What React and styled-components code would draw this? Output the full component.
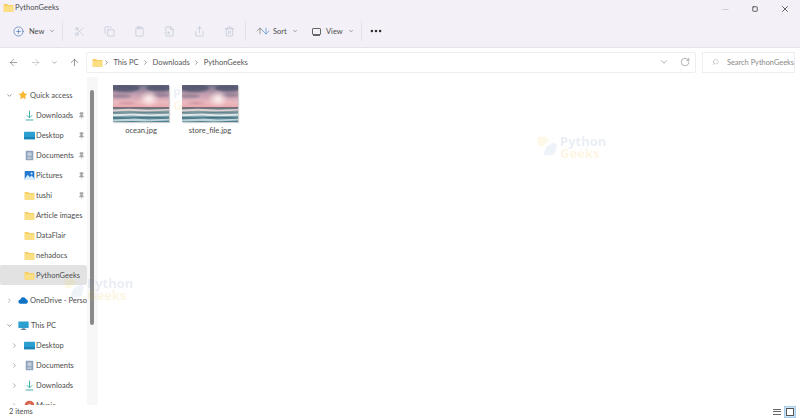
import styled, { createGlobalStyle } from "styled-components";
import {
  ArrowDown,
  ArrowLeft,
  ArrowRight,
  ArrowUp,
  ChevronDown,
  ChevronRight,
  Clipboard,
  Copy,
  MoreHorizontal,
  Pin,
  PlusCircle,
  RotateCw,
  Scissors,
  Search,
  Share,
  Trash2,
  X,
  Minus,
  Square,
  FileInput,
} from "lucide-react";

const GlobalStyle = createGlobalStyle`
  html, body { margin: 0; padding: 0; background: #fff; }
  body { font-family: Lato, "Open Sans", "Liberation Sans", sans-serif; color: #4d4d4d; overflow: hidden; }
`;

const Folder = ({ size = 11 }) => (
  <svg width={size} height={size} viewBox="0 0 16 16">
    <path d="M1 3h5l1.5 1.5H15v9.5H1z" fill="#f5cf63" />
    <path d="M1 6h14v8H1z" fill="#fbdf85" />
  </svg>
);

const DownloadIcon = () => (
  <svg width="11" height="11" viewBox="0 0 16 16" fill="none" stroke="#2fa8a0" strokeWidth="1.3">
    <path d="M8 1v10M4 7.5 8 11.5l4-4M2.5 14.5h11" />
  </svg>
);

const DesktopIcon = () => (
  <svg width="11" height="11" viewBox="0 0 16 16">
    <rect x="0" y="2.5" width="16" height="11" rx="1" fill="#2a9fd0" />
    <rect x="0" y="10" width="16" height="3.5" fill="#1b84b8" />
  </svg>
);

const DocumentsIcon = () => (
  <svg width="11" height="11" viewBox="0 0 16 16">
    <rect x="2.5" y="1" width="11" height="14" rx="1" fill="#8ea3bb" />
    <rect x="5" y="3.5" width="6" height="5" fill="#c4d0de" />
    <path d="M5 10.5h6M5 12.5h6" stroke="#d8e0e9" />
  </svg>
);

const PicturesIcon = () => (
  <svg width="11" height="11" viewBox="0 0 16 16">
    <rect x="1" y="1.5" width="14" height="13" rx="1" fill="#2378d0" />
    <path d="M1 13l4.5-6 3 3.5 2.5-2.5 4 4.5v2H1z" fill="#dbeeff" />
    <circle cx="11" cy="5" r="1.4" fill="#dbeeff" />
  </svg>
);

const StarIcon = () => (
  <svg width="10" height="10" viewBox="0 0 16 16">
    <path d="M8 .8l2.2 4.7 5 .6-3.7 3.5 1 5.1L8 12.2l-4.5 2.5 1-5.1L.8 6.1l5-.6z" fill="#f7b731" />
  </svg>
);

const CloudIcon = () => (
  <svg width="11" height="11" viewBox="0 0 16 16">
    <path d="M4 13a3.3 3.3 0 0 1-.4-6.6A4.6 4.6 0 0 1 12.4 6 3.6 3.6 0 0 1 12.5 13z" fill="#0f72c4" />
  </svg>
);

const PcIcon = () => (
  <svg width="11" height="11" viewBox="0 0 16 16">
    <rect x="0.5" y="2" width="15" height="9.5" rx="0.8" fill="#2a9fd0" />
    <rect x="6" y="11.5" width="4" height="2" fill="#7b93a8" />
    <rect x="4" y="13.3" width="8" height="1.2" fill="#5e7487" />
  </svg>
);

const MusicIcon = () => (
  <svg width="11" height="11" viewBox="0 0 16 16">
    <circle cx="8" cy="8" r="7" fill="#d9654f" />
    <circle cx="8" cy="8" r="2.5" fill="#f1d0c8" />
  </svg>
);

const waves = [
  { d: "M0 24.5l16-.8 20 1 20-.6v1.4l-22 .9-18-.7-16 .7z", fill: "#f0dcdc", o: 0.85 },
  { d: "M0 27l12 .8 22-1 22 .8v.9l-20-.5-20 .7-16-.5z", fill: "#4d6d7a", o: 0.55 },
  { d: "M0 29.3l20-.8 16 1 20-.8v1.8l-22 1-14-1-20 .8z", fill: "#e8f0f1", o: 0.9 },
  { d: "M0 32l14 .6 20-1 22 1v1.2l-18-.6-22 .8-16-.6z", fill: "#35687a", o: 0.75 },
  { d: "M0 34.6l22-1 14 1 20-.8v1.8l-24 1-12-.6-20 .6z", fill: "#cfe2e6", o: 0.85 },
];

const OceanThumb = () => (
  <Thumb viewBox="0 0 56 37" preserveAspectRatio="none">
    <defs>
      <linearGradient id="sky" x1="0" y1="0" x2="0" y2="1">
        <stop offset="0" stopColor="#70728a" />
        <stop offset="0.4" stopColor="#c19daf" />
        <stop offset="0.75" stopColor="#ecb9c0" />
        <stop offset="1" stopColor="#e7a6ab" />
      </linearGradient>
      <linearGradient id="sea" x1="0" y1="0" x2="0" y2="1">
        <stop offset="0" stopColor="#7c8c92" />
        <stop offset="0.5" stopColor="#8fadb5" />
        <stop offset="1" stopColor="#4a7c8e" />
      </linearGradient>
      <radialGradient id="sun" cx="0.5" cy="0.5" r="0.5">
        <stop offset="0" stopColor="#fff6f2" />
        <stop offset="1" stopColor="#fff6f2" stopOpacity="0" />
      </radialGradient>
      <filter id="soft" x="-5%" y="-5%" width="110%" height="110%">
        <feGaussianBlur stdDeviation="0.9" />
      </filter>
    </defs>
    <rect width="56" height="23" fill="url(#sky)" />
    <g filter="url(#soft)">
      <ellipse cx="12" cy="3" rx="15" ry="4" fill="#4e536b" opacity="0.8" />
      <ellipse cx="46" cy="3" rx="13" ry="3.5" fill="#4e536b" opacity="0.8" />
      <ellipse cx="8" cy="11" rx="10" ry="2" fill="#7d7289" opacity="0.6" />
      <ellipse cx="48" cy="10" rx="9" ry="2.2" fill="#7d7289" opacity="0.6" />
      <ellipse cx="14" cy="18" rx="9" ry="1.2" fill="#c58b99" opacity="0.8" />
      <ellipse cx="36" cy="14" rx="10" ry="8" fill="url(#sun)" />
    </g>
    <rect y="23" width="56" height="14" fill="url(#sea)" />
    <rect y="22.4" width="56" height="0.9" fill="#3c4352" />
    {waves.map((w) => (
      <path key={w.d} d={w.d} fill={w.fill} opacity={w.o} />
    ))}
  </Thumb>
);

const quickAccess = [
  { name: "Downloads", icon: <DownloadIcon />, pinned: true },
  { name: "Desktop", icon: <DesktopIcon />, pinned: true },
  { name: "Documents", icon: <DocumentsIcon />, pinned: true },
  { name: "Pictures", icon: <PicturesIcon />, pinned: true },
  { name: "tushi", icon: <Folder />, pinned: true },
  { name: "Article images", icon: <Folder /> },
  { name: "DataFlair", icon: <Folder /> },
  { name: "nehadocs", icon: <Folder /> },
];

const thisPc = [
  { name: "Desktop", icon: <DesktopIcon /> },
  { name: "Documents", icon: <DocumentsIcon /> },
  { name: "Downloads", icon: <DownloadIcon /> },
  { name: "Music", icon: <MusicIcon /> },
];

const Watermark = ({ faint, ...rest }) => (
  <Mark $faint={faint} {...rest}>
    <svg width="24" height="24" viewBox="0 0 26 26">
      <path d="M3 2h9l3 4-6 6H3z" fill="#fbd34a" />
      <path d="M12 13l8-5 4 3-3 10-12 1z" fill="#7fa2d8" />
    </svg>
    <MarkText>
      <MarkWord $blue>Python</MarkWord>
      <MarkWord>Geeks</MarkWord>
    </MarkText>
  </Mark>
);

const App = () => {
  return (
    <Window>
      <GlobalStyle />
      <Header>
        <TitleBar>
          <Folder size={11} />
          <WindowTitle>PythonGeeks</WindowTitle>
          <WindowButtons>
            <Minus size={9} color="#c4c4c4" />
            <Square size={6} color="#333" strokeWidth={3} />
            <X size={10} color="#444" />
          </WindowButtons>
        </TitleBar>
        <Toolbar>
          <ToolButton $w={49}>
            <PlusCircle size={11} strokeWidth={1.2} color="#1f5fa8" />
            New
            <ChevronDown size={6} />
          </ToolButton>
          <Divider />
          <Disabled>
            <Scissors size={11} strokeWidth={1.2} />
            <Copy size={11} strokeWidth={1.2} />
            <Clipboard size={11} strokeWidth={1.2} />
            <FileInput size={11} strokeWidth={1.2} />
            <Share size={11} strokeWidth={1.2} />
            <Trash2 size={11} strokeWidth={1.2} />
          </Disabled>
          <Divider />
          <ToolButton $w={56}>
            <SortIcons>
              <ArrowUp size={10} strokeWidth={1.3} color="#555" />
              <ArrowDown size={10} strokeWidth={1.3} color="#1f74c8" />
            </SortIcons>
            Sort
            <ChevronDown size={6} />
          </ToolButton>
          <ToolButton $w={49}>
            <ViewIcon />
            View
            <ChevronDown size={6} />
          </ToolButton>
          <Divider />
          <MoreButton size={14} color="#333" strokeWidth={2.4} />
        </Toolbar>
      </Header>

      <AddressRow>
        <NavButtons>
          <ArrowLeft size={11} strokeWidth={1.2} color="#555" />
          <ArrowRight size={11} strokeWidth={1.2} color="#aaa" />
          <ChevronDown size={7} color="#777" />
          <ArrowUp size={11} strokeWidth={1.2} color="#444" />
        </NavButtons>
        <AddressBar>
          <Folder size={11} />
          <Crumbs>
            <ChevronRight size={7} />
            This PC
            <ChevronRight size={7} />
            Downloads
            <ChevronRight size={7} />
            PythonGeeks
          </Crumbs>
          <AddressTools>
            <ChevronDown size={10} strokeWidth={1.2} color="#666" />
            <RotateCw size={10} strokeWidth={1.2} color="#666" />
          </AddressTools>
        </AddressBar>
        <SearchBox>
          <Search size={8} strokeWidth={1.2} color="#888" style={{ transform: "scaleX(-1)" }} />
          Search PythonGeeks
        </SearchBox>
      </AddressRow>

      <Body>
        <Sidebar>
          <NavRow>
            <ChevronDown size={7} color="#555" />
            <StarIcon />
            <NavLabel>Quick access</NavLabel>
          </NavRow>
          {quickAccess.map((item) => (
            <NavRow key={item.name} $indent>
              {item.icon}
              <NavLabel>{item.name}</NavLabel>
              {item.pinned && (
                <PinMark>
                  <Pin size={7} fill="#a5a5a5" color="#a5a5a5" />
                </PinMark>
              )}
            </NavRow>
          ))}
          <NavRow $indent $selected>
            <Folder />
            <NavLabel>PythonGeeks</NavLabel>
          </NavRow>
          <NavRow $gap>
            <ChevronRight size={7} color="#777" />
            <CloudIcon />
            <NavLabel>OneDrive - Perso</NavLabel>
          </NavRow>
          <NavRow $gap>
            <ChevronDown size={7} color="#555" />
            <PcIcon />
            <NavLabel>This PC</NavLabel>
          </NavRow>
          {thisPc.map((item) => (
            <NavRow key={item.name} $indent>
              <Caret>
                <ChevronRight size={7} color="#777" />
              </Caret>
              {item.icon}
              <NavLabel>{item.name}</NavLabel>
            </NavRow>
          ))}
        </Sidebar>
        <ScrollTrack>
          <ScrollThumb />
        </ScrollTrack>
        <Files>
          <FileItem>
            <OceanThumb />
            <FileName>ocean.jpg</FileName>
          </FileItem>
          <FileItem>
            <OceanThumb />
            <FileName>store_file.jpg</FileName>
          </FileItem>
          <Watermark className="main" />
          <Watermark className="thumbs" faint />
        </Files>
        <Watermark className="side" />
      </Body>

      <StatusBar>
        2 items
        <ViewButtons>
          <DetailsView>
            <span />
            <span />
            <span />
          </DetailsView>
          <TileView>
            <i />
          </TileView>
        </ViewButtons>
      </StatusBar>
    </Window>
  );
};

const Window = styled.div`
  width: 800px;
  height: 418px;
  display: flex;
  flex-direction: column;
  overflow: hidden;
  background: #fff;
`;

const Header = styled.div`
  height: 47px;
  background: #f3f0f7;
  border-bottom: 1px solid #e6e3ea;
  box-sizing: content-box;
  flex: none;
`;

const TitleBar = styled.div`
  height: 15px;
  display: flex;
  align-items: center;
  gap: 1px;
  padding-left: 3px;
`;

const WindowTitle = styled.span`
  font-size: 7.5px;
`;

const WindowButtons = styled.div`
  margin-left: auto;
  margin-top: 3px;
  display: flex;
  align-items: center;
  gap: 22px;
  padding-right: 10px;
`;

const Toolbar = styled.div`
  height: 32px;
  display: flex;
  align-items: center;
  padding-left: 13px;
  font-size: 7.5px;
`;

const ToolButton = styled.div`
  width: ${(p) => p.$w}px;
  display: flex;
  align-items: center;
  gap: 5px;
`;

const ViewIcon = styled.i`
  width: 9px;
  height: 7px;
  box-sizing: border-box;
  border: 1px solid #666;
  border-radius: 1px;
  box-shadow: 0 2px 0 -1px #666;
`;

const Divider = styled.div`
  width: 1px;
  height: 20px;
  background: #e4e1e8;
  margin-right: 10px;
`;

const Disabled = styled.div`
  display: flex;
  align-items: center;
  gap: 19px;
  width: 172px;
  padding-left: 1px;
  box-sizing: border-box;
  color: #aebccc;
`;

const SortIcons = styled.span`
  display: flex;
  margin-right: -3px;
  margin-left: -1px;

  svg + svg {
    margin-left: -4px;
  }
`;

const MoreButton = styled(MoreHorizontal)`
  margin-left: -3px;
`;

const AddressRow = styled.div`
  height: 29px;
  flex: none;
  display: flex;
  align-items: center;
  padding-bottom: 1px;
  box-sizing: border-box;
`;

const NavButtons = styled.div`
  width: 86px;
  display: flex;
  align-items: center;
  gap: 10.5px;
  padding-left: 8px;
  box-sizing: border-box;
`;

const AddressBar = styled.div`
  width: 610px;
  height: 21px;
  box-sizing: border-box;
  border: 1px solid #eeeeee;
  border-radius: 2px;
  display: flex;
  align-items: center;
  padding: 0 5px;
`;

const Crumbs = styled.div`
  display: flex;
  align-items: center;
  gap: 3.5px;
  font-size: 7.5px;
  color: #555;
`;

const AddressTools = styled.div`
  margin-left: auto;
  display: flex;
  align-items: center;
  gap: 11px;
`;

const SearchBox = styled.div`
  width: 93px;
  height: 21px;
  margin-left: 6px;
  box-sizing: border-box;
  border: 1px solid #eeeeee;
  display: flex;
  align-items: center;
  gap: 8px;
  padding-left: 9px;
  font-size: 7.4px;
  color: #888;
  white-space: nowrap;
  overflow: hidden;
`;

const Body = styled.div`
  position: relative;
  flex: 1;
  min-height: 0;
  display: flex;
  overflow: hidden;

  .side {
    left: 62px;
    top: 200px;
  }
`;

const Sidebar = styled.nav`
  width: 87px;
  flex: none;
  padding-top: 8px;
  box-sizing: border-box;
  overflow: hidden;
`;

const NavRow = styled.div`
  height: 20px;
  display: flex;
  align-items: center;
  gap: ${(p) => (p.$indent ? "1px" : "2px")};
  position: relative;
  padding-left: ${(p) => (p.$indent ? "24px" : "6px")};
  margin-top: ${(p) => (p.$gap ? "5px" : "0")};
  background: ${(p) => (p.$selected ? "#e2e2e2" : "transparent")};
  border-radius: 2px;
  font-size: 7.5px;
  white-space: nowrap;

  > svg:first-child {
    margin-right: ${(p) => (p.$indent ? "0" : "3px")};
  }
`;

const NavLabel = styled.span``;

const Caret = styled.span`
  position: absolute;
  left: 11px;
  display: flex;
`;

const PinMark = styled.span`
  position: absolute;
  right: 2px;
  display: flex;
`;

const ScrollTrack = styled.div`
  width: 11px;
  flex: none;
  background: #f7f7f7;
  padding: 13px 0 0 3px;
  box-sizing: border-box;
`;

const ScrollThumb = styled.div`
  width: 4px;
  height: 235px;
  border-radius: 2px;
  background: #8a8a8a;
`;

const Files = styled.main`
  position: relative;
  flex: 1;
  display: flex;
  align-items: flex-start;
  gap: 13px;
  padding: 8px 0 0 15px;

  .main {
    left: 437px;
    top: 58px;
  }

  .thumbs {
    left: 50px;
    top: 10px;
  }
`;

const FileItem = styled.figure`
  position: relative;
  z-index: 1;
  margin: 0;
  width: 56px;
  display: flex;
  flex-direction: column;
  align-items: center;
`;

const Thumb = styled.svg`
  display: block;
  width: 56px;
  height: 37px;
  filter: blur(0.4px);
  box-shadow: 1px 1px 1px #cfcfcf;
`;

const FileName = styled.figcaption`
  margin-top: 3px;
  font-size: 7.6px;
  white-space: nowrap;
`;

const Mark = styled.div`
  position: absolute;
  display: flex;
  align-items: center;
  gap: 1px;
  opacity: ${(p) => (p.$faint ? 0.1 : 0.13)};
  pointer-events: none;
`;

const MarkText = styled.div`
  display: flex;
  flex-direction: column;
  line-height: 12px;
`;

const MarkWord = styled.span`
  font-family: "Open Sans", sans-serif;
  font-size: 13px;
  font-weight: 700;
  color: ${(p) => (p.$blue ? "#5d7fb8" : "#f2b92e")};
`;

const StatusBar = styled.footer`
  position: relative;
  z-index: 2;
  height: 13px;
  flex: none;
  display: flex;
  align-items: center;
  padding-left: 9px;
  background: #fff;
  font-size: 7.4px;
`;

const ViewButtons = styled.div`
  margin-left: auto;
  margin-right: 4px;
  display: flex;
  align-items: center;
  gap: 3px;
`;

const DetailsView = styled.div`
  width: 8px;
  display: flex;
  flex-direction: column;
  gap: 1.5px;

  span {
    height: 1px;
    background: #666;
  }
`;

const TileView = styled.div`
  width: 12px;
  height: 12px;
  box-sizing: border-box;
  background: #cfe4f5;
  border: 1px solid #a8cde8;
  display: flex;
  align-items: center;
  justify-content: center;

  i {
    width: 6px;
    height: 6px;
    border: 1px solid #555;
    background: #fff;
  }
`;

export default App;
